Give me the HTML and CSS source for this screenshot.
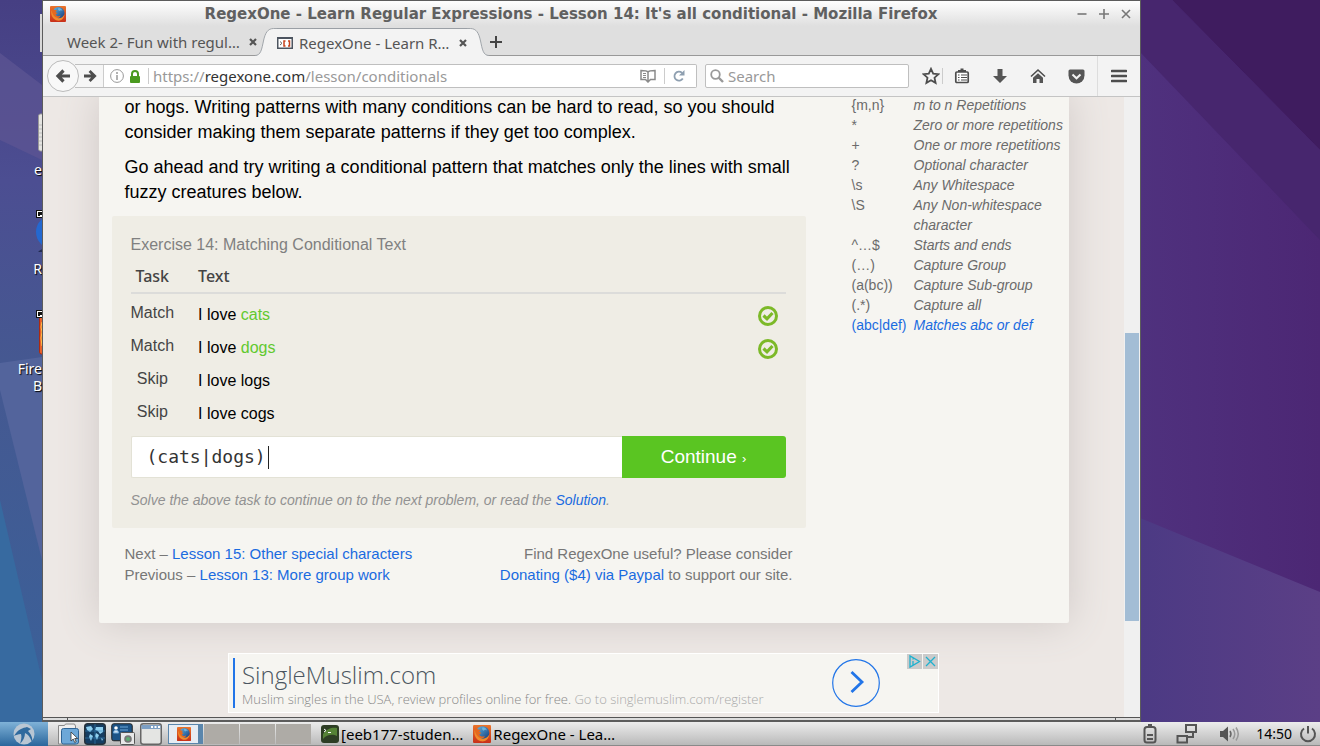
FILE: index.html
```html
<!DOCTYPE html>
<html lang="en">
<head>
<meta charset="utf-8">
<title>RegexOne - Learn Regular Expressions - Lesson 14: It's all conditional</title>
<link rel="stylesheet" href="styles.css">
</head>
<body>
<svg class="defs" width="0" height="0" aria-hidden="true">
  <defs>
    <linearGradient id="globe" x1="0" y1="0" x2="1" y2="1"><stop offset="0" stop-color="#5db8e8"/><stop offset="1" stop-color="#173a78"/></linearGradient>
    <linearGradient id="fire" x1="0" y1="0" x2="0" y2="1"><stop offset="0" stop-color="#e9742a"/><stop offset="1" stop-color="#c8301a"/></linearGradient>
  </defs>
  <symbol id="firefox" viewBox="0 0 16 16">
    <rect width="16" height="16" rx="1" fill="url(#fire)"/>
    <circle cx="8.5" cy="7" r="6" fill="url(#globe)"/>
    <path d="M2.500 2 4.500 4 7 4.200 5.500 6l2 1.200-2 1.300c1 2 3.500 2.300 5 1-.5 2.500-3.500 3.500-6 2C1.800 10 1 5 2.500 2z" fill="#e5681f"/>
    <path d="M1.500 4C.5 8 2 13 7 14.500c4 .8 7-2 7.500-6C13 11.200 10.500 12.700 7.500 12 4 11 2.200 8 1.500 4z" fill="#f08a2c"/>
    <path d="M8.500 2c2 0 3.500 1 4 3-1-1-2-1-3 0-1-.4-2-1.500-1-3z" fill="#8fd0ee" opacity=".6"/>
  </symbol>
  <symbol id="check" viewBox="0 0 20 20">
    <circle cx="10" cy="10" r="8.500" fill="none" stroke="#7cb928" stroke-width="3"/>
    <path d="M5.500 9.500 9 12.800 14.500 7" fill="none" stroke="#7cb928" stroke-width="3.200"/>
  </symbol>
</svg>

<div class="desktop">
  <svg class="wallpaper" viewBox="0 0 1320 722" preserveAspectRatio="none" aria-hidden="true">
    <defs>
      <linearGradient id="wl" x1="0" y1="0" x2="0" y2="1"><stop offset="0" stop-color="#463f83"/><stop offset=".25" stop-color="#4c4e92"/><stop offset=".5" stop-color="#455891"/><stop offset="1" stop-color="#3a6199"/></linearGradient>
      <linearGradient id="wr" x1="0" y1="0" x2="1" y2="0"><stop offset="0" stop-color="#4f317e"/><stop offset="1" stop-color="#4c2774"/></linearGradient>
      <linearGradient id="wb" x1="0" y1="0" x2="1" y2="0"><stop offset="0" stop-color="#4c3a84"/><stop offset="1" stop-color="#5b3f86"/></linearGradient>
    </defs>
    <rect width="600" height="722" fill="url(#wl)"/>
    <path d="M0 53 42 85V160L0 140z" fill="#5b5492" opacity=".8"/>
    <path d="M0 363 42 357V560L0 390z" fill="#53649c"/>
    <path d="M0 500 42 680V722H0z" fill="#376aa0"/>
    <rect x="1140" width="180" height="722" fill="url(#wr)"/>
    <path d="M1172 0H1320V150z" fill="#3f1c5f"/>
    <path d="M1140 0h32l148 150v90L1140 52z" fill="#47266e"/>
    <path d="M1140 518 1320 592V722H1140z" fill="url(#wb)"/>
  </svg>

  <div class="shortcut s0"></div>
  <div class="shortcut s1"><svg width="6" height="40" viewBox="0 0 6 40"><rect x="2.500" y="1" width="20" height="37" rx="2" fill="#e4e3e0" stroke="#999"/><path d="M3 12h9M3 16h9M3 20h9M3 24h9M3 28h9M3 32h9" stroke="#bbb"/></svg><span>e</span></div>
  <div class="shortcut s2"><svg width="6" height="44" viewBox="0 0 6 44"><circle cx="17" cy="24" r="17" fill="#2468d0"/><path d="M2 44q4-4 8-3v3z" fill="#222c52"/><rect x=".5" y="2.500" width="12" height="7" fill="#fff" stroke="#111"/><path d="M2 8V4h6v3H4v1z" fill="#111"/></svg><span>R</span></div>
  <div class="shortcut s3"><svg width="6" height="48" viewBox="0 0 6 48"><rect x="3.500" y="6" width="20" height="40" rx="2" fill="#e8622a" stroke="#ac2a10"/><path d="M6 14l-1 5 1 5-1 6 1 8" stroke="#ffc04d" fill="none"/><rect x=".5" y="2.500" width="12" height="7" fill="#fff" stroke="#111"/><path d="M2 8V4h6v3H4v1z" fill="#111"/></svg><span>Fire</span><span>B</span></div>

  <section class="window">
    <header class="titlebar">
      <svg class="app-icon" width="16" height="16"><use href="#firefox"/></svg>
      <h1>RegexOne - Learn Regular Expressions - Lesson 14: It's all conditional - Mozilla Firefox</h1>
      <div class="window-buttons">
        <button aria-label="Minimize"><svg width="12" height="12" viewBox="0 0 12 12"><path d="M1.500 6h9"/></svg></button>
        <button aria-label="Maximize"><svg width="12" height="12" viewBox="0 0 12 12"><path d="M1 6h10M6 1v10"/></svg></button>
        <button aria-label="Close"><svg width="12" height="12" viewBox="0 0 12 12"><path d="M2 2l8 8M10 2l-8 8"/></svg></button>
      </div>
    </header>

    <nav class="tabs">
      <div class="tab">
        <span class="tab-label">Week 2- Fun with regul…</span>
        <button class="tab-close" aria-label="Close tab"><svg width="8" height="8" viewBox="0 0 8 8"><path d="M1 1l6 6M7 1 1 7"/></svg></button>
      </div>
      <div class="tab active">
        <svg class="curve" width="22" height="28" viewBox="0 0 26 28" preserveAspectRatio="none"><path d="M0 28V27.500C7 27.500 8 21 10 13 12 5 15 .5 22 .5H26V28z" fill="#f3f3f3"/><path d="M0 27.500C7 27.500 8 21 10 13 12 5 15 .5 22 .5H26" fill="none" stroke="#9a9fa5"/></svg>
        <div class="tab-body">
          <svg width="16" height="12" viewBox="0 0 16 12"><rect x=".75" y=".75" width="14.500" height="10.500" fill="#fff" stroke="#4d5560" stroke-width="1.500"/><path d="M1 1.200h14" stroke="#4d5560" stroke-width="1.600"/><path d="M3 4.500l2 1.800L3 8" fill="none" stroke="#666"/><path d="M8.500 4H7v5h1.500M11 4h1.500v5H11" fill="none" stroke="#c8431d" stroke-width="1.500"/></svg>
          <span class="tab-label">RegexOne - Learn R…</span>
          <button class="tab-close" aria-label="Close tab"><svg width="8" height="8" viewBox="0 0 8 8"><path d="M1 1l6 6M7 1 1 7"/></svg></button>
        </div>
        <svg class="curve" width="22" height="28" viewBox="0 0 26 28" preserveAspectRatio="none"><path d="M26 28V27.500C19 27.500 18 21 16 13 14 5 11 .5 4 .5H0V28z" fill="#f3f3f3"/><path d="M26 27.500C19 27.500 18 21 16 13 14 5 11 .5 4 .5H0" fill="none" stroke="#9a9fa5"/></svg>
      </div>
      <button class="new-tab" aria-label="New tab"><svg width="12" height="12" viewBox="0 0 12 12"><path d="M0 6h12M6 0v12" stroke="#444" stroke-width="2"/></svg></button>
    </nav>

    <div class="toolbar">
      <button class="back" aria-label="Back"><svg width="16" height="16" viewBox="0 0 16 16"><path d="M15 8H4M8.500 2.500 3 8l5.500 5.500" fill="none" stroke="#4d4d4d" stroke-width="3.200"/></svg></button>
      <div class="urlbar">
        <button class="forward" aria-label="Forward"><svg width="13" height="14" viewBox="0 0 14 14"><path d="M0 7h11M6 1.500 11.500 7 6 12.500" fill="none" stroke="#4d4d4d" stroke-width="3"/></svg></button>
        <svg width="14" height="14" viewBox="0 0 14 14"><circle cx="7" cy="7" r="6.400" fill="none" stroke="#999"/><path d="M7 3v2M7 6v5" stroke="#999" stroke-width="1.500"/></svg>
        <svg width="10" height="13" viewBox="0 0 10 13"><rect y="6" width="10" height="7" rx="1" fill="#4a9a1f"/><path d="M2 7V4a3 3 0 0 1 6 0v3" fill="none" stroke="#4a9a1f" stroke-width="2"/></svg>
        <i class="divider"></i>
        <span class="address">https://<b>regexone.com</b>/lesson/conditionals</span>
        <button aria-label="Reader view"><svg width="16" height="14" viewBox="0 0 16 14"><path d="M8 3C7 1.500 4 1.500 1 1.500v9H5.500L8 13l2.500-2.500H15v-9c-3 0-6 0-7 1.500zV12" fill="none" stroke="#8a8a8a" stroke-width="1.500"/><path d="M3 4.500h3M3 6.500h3M3 8.500h3" stroke="#8a8a8a"/></svg></button>
        <i class="divider"></i>
        <button aria-label="Reload"><svg width="12" height="12" viewBox="0 0 12 12"><path d="M9.800 8.500A4.500 4.500 0 1 1 9 2.800" fill="none" stroke="#8e9fb0" stroke-width="1.800"/><path d="M11.500 0v5.500H6z" fill="#8e9fb0"/></svg></button>
      </div>
      <label class="searchbar">
        <svg width="14" height="14" viewBox="0 0 14 14"><circle cx="5.500" cy="5.500" r="4.300" fill="none" stroke="#999" stroke-width="1.800"/><path d="M8.500 8.500 13 13" stroke="#999" stroke-width="2.400"/></svg>
        <input type="text" placeholder="Search" aria-label="Search">
      </label>
      <div class="actions">
        <button aria-label="Bookmark"><svg width="18" height="18" viewBox="0 0 18 18"><path d="M9 1.800l2.200 4.800 5.200.6-3.900 3.500 1.100 5.200L9 13.300l-4.600 2.600 1.100-5.200L1.600 7.200l5.200-.6z" fill="none" stroke="#4d4d4d" stroke-width="1.800"/></svg></button>
        <i class="divider"></i>
        <button aria-label="Bookmarks list"><svg width="16" height="16" viewBox="0 0 16 16"><rect x="1.800" y="4" width="12.400" height="10.500" rx="1" fill="#fff" stroke="#4d4d4d" stroke-width="1.700"/><path d="M4 4V2h2.500V.5h3V2H12v2" fill="#4d4d4d"/><path d="M4 7h1.500M7 7h6M4 9.500h1.500M7 9.500h6M4 12h1.500M7 12h6" stroke="#4d4d4d" stroke-width="1.200"/></svg></button>
        <button aria-label="Downloads"><svg width="16" height="16" viewBox="0 0 16 16"><path d="M5.500 1h5v7H15l-7 7-7-7h4.500z" fill="#555"/></svg></button>
        <button aria-label="Home"><svg width="16" height="16" viewBox="0 0 16 16"><path d="M1 8.500 8 2l7 6.500" fill="none" stroke="#4d4d4d" stroke-width="1.600"/><path d="M3 9.700 8 5.200l5 4.500V15H9.500v-4h-3v4H3z" fill="#555"/></svg></button>
        <button aria-label="Pocket"><svg width="17" height="15" viewBox="0 0 17 15"><path d="M2 .5h13q1.500 0 1.500 1.500v4.500a8 8 0 0 1-16 0V2Q.5.5 2 .5z" fill="#555"/><path d="M4.500 5.500l4 3.800 4-3.800" fill="none" stroke="#f3f3f3" stroke-width="2"/></svg></button>
      </div>
      <button class="menu" aria-label="Menu"><svg width="16" height="14" viewBox="0 0 16 14"><path d="M1 2h14M1 7h14M1 12h14" stroke="#4d4d4d" stroke-width="2.600" stroke-linecap="round"/></svg></button>
    </div>

    <div class="viewport">
      <div class="page">
        <div class="paper">
          <main class="lesson">
            <p>or hogs. Writing patterns with many conditions can be hard to read, so you should<br>consider making them separate patterns if they get too complex.</p>
            <p>Go ahead and try writing a conditional pattern that matches only the lines with small<br>fuzzy creatures below.</p>
            <form class="exercise">
              <h2>Exercise 14: Matching Conditional Text</h2>
              <table class="tasks">
                <thead><tr><th>Task</th><th colspan="2">Text</th></tr></thead>
                <tbody>
                  <tr><td>Match</td><td>I love <em>cats</em></td><td><svg width="20" height="20"><use href="#check"/></svg></td></tr>
                  <tr><td>Match</td><td>I love <em>dogs</em></td><td><svg width="20" height="20"><use href="#check"/></svg></td></tr>
                  <tr><td>Skip</td><td>I love logs</td><td></td></tr>
                  <tr><td>Skip</td><td>I love cogs</td><td></td></tr>
                </tbody>
              </table>
              <div class="answer">
                <label class="answer-field"><input type="text" value="(cats|dogs)" size="10" aria-label="Pattern"><i class="caret"></i></label>
                <button type="button">Continue <small>›</small></button>
              </div>
              <div class="hint">Solve the above task to continue on to the next problem, or read the <a href="#solution">Solution</a>.</div>
            </form>
            <footer class="links">
              <div>Next – <a href="#15">Lesson 15: Other special characters</a><br>Previous – <a href="#13">Lesson 13: More group work</a></div>
              <div class="donate">Find RegexOne useful? Please consider<br><a href="#donate">Donating ($4) via Paypal</a> to support our site.</div>
            </footer>
          </main>
          <aside class="notes">
            <table>
              <tr><td>{m,n}</td><td>m to n Repetitions</td></tr>
              <tr><td>*</td><td>Zero or more repetitions</td></tr>
              <tr><td>+</td><td>One or more repetitions</td></tr>
              <tr><td>?</td><td>Optional character</td></tr>
              <tr><td>\s</td><td>Any Whitespace</td></tr>
              <tr><td>\S</td><td>Any Non-whitespace<br>character</td></tr>
              <tr><td>^…$</td><td>Starts and ends</td></tr>
              <tr><td>(…)</td><td>Capture Group</td></tr>
              <tr><td>(a(bc))</td><td>Capture Sub-group</td></tr>
              <tr><td>(.*)</td><td>Capture all</td></tr>
              <tr class="current"><td>(abc|def)</td><td>Matches abc or def</td></tr>
            </table>
          </aside>
        </div>
        <div class="ad">
          <div class="ad-copy">
            <strong>SingleMuslim.com</strong>
            <span>Muslim singles in the USA, review profiles online for free. <span class="faint">Go to singlemuslim.com/register</span></span>
          </div>
          <button class="ad-go" aria-label="Open"><svg width="48" height="48" viewBox="0 0 48 48"><circle cx="24" cy="24" r="23.300" fill="none" stroke="#2275e8" stroke-width="1.200"/><path d="M19.500 13 30 23 19.500 33" fill="none" stroke="#2275e8" stroke-width="2.800"/></svg></button>
          <div class="ad-choices">
            <svg width="15" height="15" viewBox="0 0 15 15"><path d="M3 2v11l9.500-5.500zM6 7v4M6 4.500v1" fill="none" stroke="#1fb1cf" stroke-width="1.300"/></svg>
            <svg width="15" height="15" viewBox="0 0 15 15"><path d="M3 3l9 9M12 3l-9 9" fill="none" stroke="#1fb1cf" stroke-width="1.300"/></svg>
          </div>
        </div>
      </div>
      <div class="scrollbar"><div class="thumb"></div></div>
    </div>
    <div class="window-foot"><i></i><i></i></div>
  </section>
</div>

<footer class="taskbar">
  <button class="start" aria-label="Applications"><svg width="22" height="22" viewBox="0 0 22 22"><circle cx="11" cy="11" r="10.500" fill="#b9c6d3"/><path d="M1 13C5 6 10 5 14 4l4 2-3 2c3 3 5 7 4 11-2-5-4-8-7-9 0 4-2 8-5 11 1-4 2-7 1-10-3 0-5 1-7 2z" fill="#2f6a9e"/></svg></button>
  <div class="launchers">
    <svg width="22" height="22" viewBox="0 0 22 22"><path d="M1.500 2.500h6l1-1.500h9l1 2v18h-17z" fill="#eee" stroke="#888"/><rect x="4.500" y="5.500" width="17" height="15.500" rx="2" fill="#6da8d8" stroke="#2d6496"/><path d="M14 9v9l2.200-2 1.500 3.500 1.500-.8-1.500-3.200h3z" fill="#fff" stroke="#333" stroke-width=".8"/></svg>
    <svg width="22" height="22" viewBox="0 0 22 22"><rect x=".75" y=".75" width="20.500" height="20.500" rx="3" fill="#153e63" stroke="#26323c" stroke-width="1.500"/><path d="M2 4l5-1 2 3-3 3-3-2zM6 11l3 2-2 5-2-4zM12 4l7 0v5l-3 2-2-3-3-1zM12 10l3 2-2 5-2-4zM17 15l2 1-1 2z" fill="#8fd0f0"/><path d="M1 15h20M1 8h20M11 1v20" stroke="#3a84b8" stroke-width=".6"/></svg>
    <svg width="24" height="22" viewBox="0 0 24 22"><rect x=".75" y=".75" width="20.500" height="17" rx="2" fill="#1d5487" stroke="#222"/><circle cx="5" cy="5" r="1.800" fill="#fff"/><path d="M2.500 10c0-4 5-4 5 0zM9 4h8M9 7h8" fill="#cfe3f4" stroke="#6fa8d8"/><rect x="9.500" y="9.500" width="14" height="12" rx="1" fill="#e8e8e8" stroke="#555"/><circle cx="17" cy="16" r="3.800" fill="#777"/><circle cx="17" cy="16" r="2" fill="#5fae72"/></svg>
    <svg width="22" height="22" viewBox="0 0 22 22"><rect x=".75" y=".75" width="20.500" height="20.500" rx="2.500" fill="#e4e5e3" stroke="#666" stroke-width="1.500"/><path d="M1.500 2h19v4h-19z" fill="#7c9fc4"/><path d="M11 4h2M14.500 4h2M18 4h2" stroke="#fff" stroke-width="2"/></svg>
  </div>
  <div class="pager"><div class="desk on"><svg width="14" height="14"><use href="#firefox"/></svg></div><div class="desk"></div><div class="desk"></div><div class="desk"></div></div>
  <button class="task"><svg width="18" height="18" viewBox="0 0 18 18"><rect width="18" height="18" rx="3" fill="#2d3d24"/><path d="M2 9c4-6 10-7 14-6v8c-4-2-10-2-14 3z" fill="#558236"/><path d="M3 4l2 1.500L3 7M7 7.500h3" fill="none" stroke="#fff"/></svg>[eeb177-studen…</button>
  <button class="task"><svg width="18" height="18"><use href="#firefox"/></svg>RegexOne - Lea…</button>
  <div class="tray">
    <svg class="battery" width="14" height="20" viewBox="0 0 14 20"><rect x="1.500" y="3" width="11" height="15.500" rx="2.500" fill="none" stroke="#555" stroke-width="2"/><path d="M5 1.200h4" stroke="#555" stroke-width="2.400"/><path d="M4 11h6M4 15h6" stroke="#555" stroke-width="2.200"/></svg>
    <svg class="net" width="22" height="22" viewBox="0 0 22 22"><path d="M10 2h10v7H10zM1.500 13h9.500v6.500H1.500zM17 9v5h-6" fill="none" stroke="#555" stroke-width="2"/></svg>
    <svg class="volume" width="22" height="18" viewBox="0 0 22 18"><path d="M1 6h3l5-4.500v15L4 12H1z" fill="#555"/><path d="M11 6q2 3 0 6" fill="none" stroke="#666" stroke-width="1.500"/><path d="M14 4q3.500 5 0 10M17 2.500q4.500 6.500 0 13" fill="none" stroke="#999" stroke-width="1.500"/></svg>
    <time>14:50</time>
    <button aria-label="Power"><svg width="18" height="18" viewBox="0 0 18 18"><path d="M5 3.500a7 7 0 1 0 8 0M9 1v7.500" fill="none" stroke="#555" stroke-width="2"/></svg></button>
  </div>
</footer>
</body>
</html>
```

FILE: styles.css
```css
* { box-sizing: border-box; }
html, body { height: 100%; }
body {
  margin: 0;
  display: flex;
  flex-direction: column;
  overflow: hidden;
  font-family: "Liberation Sans", Arial, sans-serif;
}
button { padding: 0; border: 0; background: none; font: inherit; color: inherit; }
svg { display: block; flex: none; }
a { color: #1a6be0; text-decoration: none; }
h1, h2, p { margin: 0; font-weight: normal; }
.defs { position: absolute; }

/* Desktop */
.desktop { position: relative; flex: 1; min-height: 0; overflow: hidden; background: #4d388a; }
.wallpaper { position: absolute; width: 100%; height: 100%; }
.shortcut {
  position: absolute;
  left: 0;
  width: 42px;
  display: flex;
  flex-direction: column;
  align-items: flex-end;
  overflow: hidden;
  font: 14px/17px "Noto Sans", sans-serif;
  color: #fff;
  text-shadow: 1px 1px 1px #000;
}
.shortcut svg { margin-bottom: 8px; overflow: hidden; }
.s0 { top: 14px; height: 38px; left: 40px; width: 2px; background: #d8d8d8; }
.s1 { top: 113px; }
.s2 { top: 208px; }
.s3 { top: 308px; }
.shortcut.s3 svg { margin-bottom: 4px; }

/* Window frame */
.window {
  position: absolute;
  inset: 0 179px 0 42px;
  display: flex;
  flex-direction: column;
  border: 1px solid #5c5c5c;
  border-bottom-width: 2px;
  background: #f3f3f3;
}
.titlebar {
  height: 25px;
  display: flex;
  align-items: center;
  padding: 0 8px 0 7px;
  background: linear-gradient(#fefefe, #dfdfdf);
}
.titlebar h1 {
  flex: 1;
  text-align: center;
  font: bold 15px/24px "DejaVu Sans", sans-serif;
  color: #606060;
  white-space: nowrap;
}
.window-buttons { display: flex; gap: 10px; }
.window-buttons path { fill: none; stroke: #777; stroke-width: 1.600; }

/* Tabs */
.tabs {
  height: 30px;
  display: flex;
  align-items: flex-end;
  padding-left: 24px;
  background: #dfdfdf;
  box-shadow: inset 0 -1px #999;
  font: 15px/26px "Noto Sans", sans-serif;
  color: #555;
}
.tab { display: flex; align-items: center; height: 28px; }
.tab-label { white-space: nowrap; }
.tab:first-child { width: 190px; margin-right: -2px; justify-content: space-between; }
.tab-close path { stroke: #555; stroke-width: 2.200; }
.tab.active { width: 234px; }
.tab-body {
  flex: 1;
  height: 28px;
  display: flex;
  align-items: center;
  gap: 6px;
  background: #f3f3f3;
  border-top: 1px solid #9a9fa5;
}
.tab-body .tab-close { margin-left: auto; }
.new-tab { height: 28px; padding: 0 0 0 1px; }

/* Navigation toolbar */
.toolbar {
  height: 41px;
  display: flex;
  align-items: center;
  padding-left: 4px;
  border-bottom: 1px solid #c4c4c4;
  font: 15px/22px "Noto Sans", sans-serif;
  color: #999;
}
.back {
  position: relative;
  width: 32px;
  height: 32px;
  display: grid;
  place-items: center;
  border: 1px solid #bbb;
  border-radius: 50%;
  background: #f8f8f8;
}
.urlbar {
  flex: 1;
  height: 24px;
  display: flex;
  align-items: center;
  gap: 6px;
  margin-left: -4px;
  padding-right: 11px;
  border: 1px solid #bfbfbf;
  border-left: 0;
  border-radius: 0 2px 2px 0;
  background: #fff;
}
.forward {
  width: 29px;
  height: 22px;
  padding-left: 9px;
  border-right: 1px solid #ccc;
  background: #f6f6f6;
}
.divider { width: 1px; height: 16px; background: #ccc; }
.address { flex: 1; white-space: nowrap; }
.address b { font-weight: normal; color: #333; }
.urlbar .divider { margin: 0 2px; }
.urlbar .divider + .address { margin-left: -4px; }
.searchbar {
  width: 204px;
  height: 24px;
  display: flex;
  align-items: center;
  gap: 4px;
  margin-left: 8px;
  padding: 0 4px;
  border: 1px solid #bfbfbf;
  border-radius: 2px;
  background: #fff;
}
.searchbar input { flex: 1; min-width: 0; padding: 0; border: 0; outline: 0; font: inherit; background: none; }
.searchbar input::placeholder { color: #999; opacity: 1; }
.actions { display: flex; align-items: center; gap: 22px; padding: 0 12px 0 13px; }
.actions .divider { margin: 0 -11px 0 -20px; }
.menu { height: 40px; padding: 0 13px; border-left: 1px solid #ddd; }

/* Page viewport */
.viewport { flex: 1; min-height: 0; display: flex; overflow: hidden; background: #ede8e5; }
.page { flex: 1; overflow: hidden; }
.paper {
  display: flex;
  justify-content: space-between;
  max-width: 970px;
  margin: -2px auto 30px;
  padding: 0 0 38px 26px;
  border-radius: 0 0 2px 2px;
  background: #f6f5f1;
  box-shadow: 0 0 40px #cfc8c6;
}
.lesson { width: 681px; }
.lesson p { margin-bottom: 10px; font-size: 18px; line-height: 25px; color: #000; white-space: nowrap; }
.exercise {
  margin: 11px 0 15px -13px;
  padding: 17px 20px 17px 19px;
  border-radius: 2px;
  background: #efede5;
}
.exercise h2 { font-size: 16px; line-height: 24px; color: #808080; }
.tasks { width: 100%; margin-bottom: 5px; border-collapse: collapse; font-size: 16px; line-height: 32px; }
.tasks th {
  padding: 4px 0 1px;
  border-bottom: 2px solid #dcdcda;
  font: 500 16px/30px "Noto Sans", sans-serif;
  color: #444;
  text-align: left;
}
.tasks th:first-child, .tasks td:first-child { width: 43px; text-align: center; }
.tasks th + th, .tasks td + td { padding-left: 24px; }
.tasks td { padding: 0; height: 33px; vertical-align: top; color: #000; }
.tasks td:first-child { line-height: 28px; color: #444; }
.tasks td:last-child { width: 51px; padding: 7px 8px 0 23px; line-height: 20px; }
.tasks tbody::before { content: ""; display: block; height: 5px; }
.tasks em { font-style: normal; color: #62c92f; }
.answer { height: 42px; display: flex; }
.answer-field {
  flex: 1;
  display: flex;
  align-items: center;
  padding-left: 15px;
  border: 1px solid #e3e2d6;
  border-right: 0;
  border-radius: 2px 0 0 2px;
  background: #fff;
}
.answer-field input {
  width: 121px;
  padding: 0;
  border: 0;
  outline: 0;
  background: none;
  font: 18px/24px "DejaVu Sans Mono", monospace;
  color: #333;
}
.caret { width: 1px; height: 23px; background: #222; }
.answer button { width: 164px; border-radius: 0 3px 3px 0; background: #5ac522; color: #fff; font-size: 19px; }
.answer small { font-size: 13px; }
.hint { padding-top: 11px; line-height: 22px; font-size: 14px; font-style: italic; color: #929292; }
.links { display: flex; justify-content: space-between; padding-right: 13px; font-size: 15px; line-height: 21px; color: #777; }
.donate { text-align: right; }
.notes { width: 217px; font-size: 14px; line-height: 20px; color: #6b6b6b; }
.notes table { border-collapse: collapse; }
.notes td { padding: 0; vertical-align: top; white-space: nowrap; }
.notes td:first-child { width: 62px; }
.notes td + td { font-style: italic; }
.notes .current { color: #1a6be0; }

/* Advertisement */
.ad {
  position: relative;
  width: 711px;
  max-width: 100%;
  height: 60px;
  margin: 0 auto;
  display: flex;
  align-items: center;
  justify-content: space-between;
  padding: 4px 58px 4px 4px;
  border: 1px solid #fff;
  background: #f6f5f1;
}
.ad-copy { height: 50px; display: flex; flex-direction: column; padding-left: 7px; border-left: 2px solid #2275e8; font-family: "Open Sans", sans-serif; font-weight: 300; }
.ad-copy strong { font-size: 24px; line-height: 34px; font-weight: 300; color: #4b5560; }
.ad-copy span { font-size: 13px; line-height: 14px; color: #888; white-space: nowrap; }
.ad-copy .faint { color: #aaa; }
.ad-choices { position: absolute; top: 0; right: 0; display: flex; gap: 1px; }
.ad-choices svg { background: #cbcbcb; }

.scrollbar { width: 16px; padding: 0 1px; background: #f0f0f0; }
.thumb { height: 46.5%; background: #a3bdd5; }
.scrollbar::before { content: ""; display: block; height: 38%; }
.window-foot { height: 3px; display: flex; justify-content: space-between; padding: 0 24px; border-top: 1px solid #555; background: #ddd; }
.window-foot i { width: 1px; background: #555; }

/* Taskbar */
.taskbar {
  height: 24px;
  display: flex;
  align-items: center;
  background: linear-gradient(#ececec, #b9b9b9);
  border-bottom: 1px solid #8a8a8a;
  font: 14px/22px "Noto Sans", sans-serif;
  color: #000;
  white-space: nowrap;
}
.start { width: 48px; height: 24px; display: grid; place-items: center; background: linear-gradient(#7fb2d8, #2a669c); }
.launchers { display: flex; gap: 5px; padding: 0 6px 0 9px; }
.pager { display: flex; gap: 1px; }
.desk { width: 35px; height: 20px; background: #aeaba6; }
.desk.on { display: grid; place-items: center; border: 1px solid #5a86ac; border-right-width: 5px; background: #e6ecf3; }
.task { display: flex; align-items: center; gap: 2px; margin-left: 10px; font-size: 15px; }
.tray { margin-left: auto; display: flex; align-items: center; padding-right: 3px; }
.battery { margin-right: 2px; }
.net { margin-left: 17px; }
.volume { margin-left: 21px; }
.tray time { margin: 0 7px 0 15px; }
```
